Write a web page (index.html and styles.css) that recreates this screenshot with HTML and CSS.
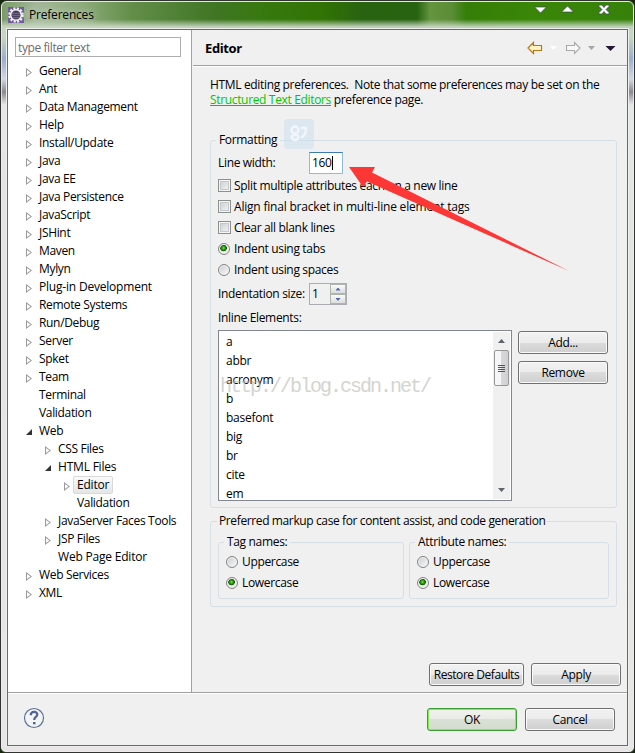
FILE: index.html
```html
<!DOCTYPE html>
<html lang="en">
<head>
<meta charset="utf-8">
<title>Preferences</title>
<link rel="stylesheet" href="styles.css">
</head>
<body>
<div class="window">
  <header class="titlebar">
    <svg class="app-icon" width="16" height="16" viewBox="0 0 16 16"><rect width="16" height="16" fill="#705d99"/><circle cx="8" cy="8" r="6.3" fill="none" stroke="#eee" stroke-width="3" stroke-dasharray="2 1.3"/><circle cx="8" cy="8" r="5.3" fill="#4a4060" stroke="#eee" stroke-width="1.6"/><path d="M4 6.5h8M3.5 8.5h9M4 10.5h8" stroke="#77738c" stroke-width=".8"/></svg>
    <span class="title">Preferences</span>
    <svg class="controls" width="100" height="18" viewBox="0 0 100 18"><g fill="#fff" stroke="#3c405f" stroke-width=".7"><path d="M9.5 5h12L15.500 11z"/><path d="M36.500 10h12L42.500 4z"/><path d="M74 3h3l2 2.500 2-2.500h3v1.500l-3 3 3 3v1.500h-3l-2-2.500-2 2.500h-3v-1.500l3-3-3-3z"/></g></svg>
  </header>
  <main class="client">
    <div class="panes">
      <nav class="sidebar">
        <div class="filter">type filter text</div>
        <ul class="tree">
          <li><i class="closed"></i><span>General</span></li>
          <li><i class="closed"></i><span>Ant</span></li>
          <li><i class="closed"></i><span>Data Management</span></li>
          <li><i class="closed"></i><span>Help</span></li>
          <li><i class="closed"></i><span>Install/Update</span></li>
          <li><i class="closed"></i><span>Java</span></li>
          <li><i class="closed"></i><span>Java EE</span></li>
          <li><i class="closed"></i><span>Java Persistence</span></li>
          <li><i class="closed"></i><span>JavaScript</span></li>
          <li><i class="closed"></i><span>JSHint</span></li>
          <li><i class="closed"></i><span>Maven</span></li>
          <li><i class="closed"></i><span>Mylyn</span></li>
          <li><i class="closed"></i><span class="loose">Plug-in Development</span></li>
          <li><i class="closed"></i><span>Remote Systems</span></li>
          <li><i class="closed"></i><span>Run/Debug</span></li>
          <li><i class="closed"></i><span>Server</span></li>
          <li><i class="closed"></i><span>Spket</span></li>
          <li><i class="closed"></i><span>Team</span></li>
          <li><i></i><span>Terminal</span></li>
          <li><i></i><span>Validation</span></li>
          <li><i class="open"></i><span>Web</span></li>
          <li class="l2"><i class="closed"></i><span>CSS Files</span></li>
          <li class="l2"><i class="open"></i><span class="loose">HTML Files</span></li>
          <li class="l3"><i class="closed"></i><span class="selected">Editor</span></li>
          <li class="l3"><i></i><span>Validation</span></li>
          <li class="l2"><i class="closed"></i><span>JavaServer Faces Tools</span></li>
          <li class="l2"><i class="closed"></i><span>JSP Files</span></li>
          <li class="l2"><i></i><span class="loose">Web Page Editor</span></li>
          <li><i class="closed"></i><span>Web Services</span></li>
          <li><i class="closed"></i><span>XML</span></li>
        </ul>
      </nav>
      <section class="page">
        <div class="page-head">
          <h1>Editor</h1>
          <svg width="92" height="14" viewBox="0 0 92 14"><path d="M1 7L6.500 1.500V4.500H14.500V9.500H6.500V12.500Z" fill="#fff2c4" stroke="#b87818" stroke-width="1.200"/><path d="M23 5h7l-3.500 4z" fill="#fff"/><path d="M53 7L47.500 1.500V4.500H39.500V9.500H47.500V12.500Z" fill="#f8f8f8" stroke="#aaa" stroke-width="1.100"/><path d="M61 5h7l-3.500 4z" fill="#a5a5a5"/><path d="M78.500 5h10l-5 5z" fill="#251432"/></svg>
        </div>
        <div class="page-body">
          <p class="intro">HTML editing preferences.&nbsp; Note that some preferences may be set on the<br><a>Structured Text Editors</a> preference page.</p>
          <fieldset class="formatting">
            <legend>Formatting</legend>
            <div class="row width-row"><span class="label">Line width:</span><span class="input">160<b class="caret"></b></span></div>
            <div class="row"><i class="check"></i><span>Split multiple attributes each on a new line</span></div>
            <div class="row"><i class="check"></i><span class="wide">Align final bracket in multi-line element tags</span></div>
            <div class="row"><i class="check"></i><span>Clear all blank lines</span></div>
            <div class="row"><i class="radio on"></i><span>Indent using tabs</span></div>
            <div class="row"><i class="radio"></i><span>Indent using spaces</span></div>
            <div class="row size-row"><span class="label">Indentation size:</span><span class="spinner"><span class="num">1</span><span class="steps"><i class="up"></i><i class="down"></i></span></span></div>
            <div class="row inline-row"><span>Inline Elements:</span></div>
            <div class="elements">
              <div class="list">
                <ul><li>a</li><li>abbr</li><li>acronym</li><li>b</li><li>basefont</li><li>big</li><li>br</li><li>cite</li><li>em</li></ul>
                <div class="scroll"><i class="up"></i><div class="thumb"><i></i><i></i><i></i><i></i></div><i class="down"></i></div>
              </div>
              <div class="side"><button>Add...</button><button>Remove</button></div>
            </div>
          </fieldset>
          <fieldset class="markup">
            <legend>Preferred markup case for content assist, and code generation</legend>
            <div class="cases">
              <fieldset><legend>Tag names:</legend>
                <div class="row"><i class="radio"></i><span>Uppercase</span></div>
                <div class="row"><i class="radio on"></i><span>Lowercase</span></div>
              </fieldset>
              <fieldset><legend>Attribute names:</legend>
                <div class="row"><i class="radio"></i><span>Uppercase</span></div>
                <div class="row"><i class="radio on"></i><span>Lowercase</span></div>
              </fieldset>
            </div>
          </fieldset>
          <div class="page-actions"><button class="restore">Restore Defaults</button><button>Apply</button></div>
        </div>
      </section>
    </div>
    <footer class="footer">
      <svg width="22" height="22" viewBox="0 0 22 22"><circle cx="11" cy="11" r="9.500" fill="#f3f4f6" stroke="#5c7399" stroke-width="1.200"/><path d="M7.700 8.300C7.800 3.700 14.600 4 14.300 7.700C14.100 10.100 11.200 9.900 11.200 13" fill="none" stroke="#506593" stroke-width="2.200"/><rect x="10" y="15" width="2.500" height="2.300" fill="#506593"/></svg>
      <div class="dialog-actions"><button class="ok">OK</button><button>Cancel</button></div>
    </footer>
  </main>
  <svg class="badge" width="30" height="30" viewBox="0 0 30 30"><rect width="30" height="30" rx="4" fill="#c8def0" opacity=".5"/><g fill="none" stroke="#f1f6fa" stroke-width="2.400" stroke-linecap="round"><circle cx="11" cy="11" r="3.500"/><path d="M8 17c3-2 8-1 6 2.500c-2 3-7 1-6-2M18 9h4q0 7-4 9"/></g></svg>
  <span class="watermark">http://blog.csdn.net/</span>
  <svg class="arrow" width="222" height="106" viewBox="0 0 222 106"><path d="M0 0H26L23 5.500L220 104L18 14.500L14 20Z" fill="#fc3736"/></svg>
</div>
</body>
</html>
```
FILE: styles.css
```css
* { box-sizing: border-box; }
html, body { margin: 0; }
body { width: 635px; height: 753px; overflow: hidden; background: #16280c; font: 12px/18px "Open Sans", "Noto Sans", sans-serif; letter-spacing: -.33px; color: #000; }
ul, p, h1 { margin: 0; padding: 0; list-style: none; }
i, b { display: block; flex: none; }
.window { position: relative; width: 635px; height: 753px; border: 1px solid #30332f; border-radius: 7px 7px 6px 6px; overflow: hidden; background: linear-gradient(#c5d6c2 0, #c5d6c2 36px, #9aafcd 58px, #d1d8e3 78px, #8e8791 91px, #e7e7ea 104px, #e4e3e3 200px, #e7e5e5 745px); display: flex; flex-direction: column; padding: 1px 6px 6px; }
.window::after { content: ""; position: absolute; inset: 0; border: 1px solid #e9efe8; border-radius: 6px 6px 5px 5px; opacity: .8; }
.titlebar { height: 27px; margin: 0 -5px; padding: 0 0 0 6px; display: flex; flex: none; align-items: flex-start; background: linear-gradient(transparent 64%, #c9d8c4ee 92%), linear-gradient(90deg, #7a9c68 0, #a3b79a 35px, #8dab7b 80px, #628e49 130px, #3f7523 215px, #38790f 260px, #317304 320px, #296311 360px, #276310 415px, #64943e 428px, #5a8d35 450px, #357e08 464px, #3a8607 530px, #36810b 100%); }
.app-icon { margin-top: 5px; flex: none; }
.title { margin: 4px auto 0 5px; letter-spacing: -.2px; text-shadow: 0 0 6px #dce7d5; }
.controls { margin-right: 8px; }
.client { flex: 1; min-height: 0; border: 1px solid #666b66; background: #f0f0f0; display: flex; flex-direction: column; box-shadow: 0 0 0 1px #edf0ec; }
.panes { flex: 1; display: flex; min-height: 0; }
.sidebar { width: 184px; flex: none; background: #fff; border-right: 1px solid #a0a0a0; padding: 7px 0 0 7px; }
.filter { width: 166px; height: 20px; border: 1px solid #abadb3; padding-left: 2px; color: #6d6d6d; line-height: 19px; letter-spacing: -.4px; }
.tree { margin-top: 5px; }
.tree li { height: 18px; display: flex; align-items: center; padding-left: 10px; white-space: nowrap; }
.tree li.l2 { padding-left: 29px; }
.tree li.l3 { padding-left: 48px; }
.tree i { width: 6px; height: 9px; margin: 3px 7px 0 1px; }
.tree i.closed { background: #999; clip-path: polygon(0 0, 100% 50%, 0 100%); position: relative; }
.tree i.closed::after { content: ""; position: absolute; inset: 0; background: #fff; clip-path: polygon(1px 2px, 4.5px 50%, 1px 7px); }
.tree i.open { background: #333; clip-path: polygon(100% 1px, 100% 7px, 0 7px); }
.loose { letter-spacing: -.2px; }
.selected { height: 18px; line-height: 16px; margin-left: -4px; padding: 0 3px; border: 1px solid #d9d9d9; border-radius: 2px; background: linear-gradient(#fafafa, #e6e6e6); letter-spacing: -.2px; }
.page { flex: 1; min-width: 0; margin-left: 1px; display: flex; flex-direction: column; }
.page-head { height: 36px; border-bottom: 1px solid #a0a0a0; box-shadow: 0 1px #fff; display: flex; justify-content: space-between; align-items: center; padding: 1px 8px 0 12px; }
h1 { font-size: 13px; letter-spacing: -.4px; }
.page-body { flex: 1; padding: 11px 6px 0 17px; }
.intro { line-height: 15px; height: 55px; white-space: nowrap; letter-spacing: -.34px; }
.intro a { color: #00c800; text-decoration: underline; }
fieldset { min-width: 0; margin: 0; padding: 0; border: 1px solid #d5dfe5; border-radius: 3px; }
legend { height: 16px; line-height: 16px; margin-left: -2px; padding: 0 3px; white-space: nowrap; }
.formatting { width: 407px; height: 376px; padding: 3px 7px 0; }
.row { height: 21px; display: flex; align-items: center; white-space: nowrap; }
.width-row { height: 24px; }
.width-row .label { width: 91px; }
.wide { letter-spacing: -.2px; }
.input { width: 34px; height: 22px; border: 1px solid #8fbbe0; border-top-color: #3d7bad; background: #fff; display: flex; align-items: center; padding-left: 2px; }
.caret { width: 1px; height: 14px; background: #000; }
.check { width: 13px; height: 13px; border: 1px solid #8e8f8f; background: linear-gradient(135deg, #c6cbd0, #f8f8f8); box-shadow: inset 0 0 0 1px #f4f4f4, inset 0 0 0 2px #c4c9cb; margin-right: 3px; }
.radio { width: 12px; height: 12px; border: 1px solid #848484; border-radius: 50%; background: linear-gradient(135deg, #c8ccd0, #fafafa); box-shadow: inset 0 0 0 1px #f4f4f4; margin-right: 4px; }
.radio.on { background: radial-gradient(circle at 45% 40%, #7de44d 0, #33a50c 1.500px, #125306 3px, #e4eae3 3.600px); }
.size-row { height: 28px; }
.size-row .label { width: 91px; }
.spinner { width: 38px; height: 22px; border: 1px solid #abadb3; display: flex; padding-left: 2px; }
.num { flex: 1; line-height: 20px; }
.steps { width: 16px; display: flex; flex-direction: column; }
.steps i { flex: 1; border: 1px solid #adb5ad; background: linear-gradient(#fafafa, #ddd); display: grid; place-items: center; }
.steps i::after { content: ""; width: 5px; height: 3px; background: #4a64a8; clip-path: polygon(50% 0, 100% 100%, 0 100%); }
.steps .down::after { transform: scaleY(-1); }
.inline-row { height: 20px; }
.elements { display: flex; margin-top: 2px; gap: 6px; }
.list { width: 294px; height: 171px; border: 1px solid #828790; background: #fff; display: flex; overflow: hidden; padding: 1px; }
.list ul { flex: 1; padding: 0 0 0 6px; letter-spacing: -.25px; }
.list li { height: 19px; line-height: 19px; }
.scroll { width: 17px; background: #f0f0f0; display: flex; flex-direction: column; align-items: center; padding: 7px 1px; }
.scroll .up, .scroll .down { width: 7px; height: 4px; background: #606468; clip-path: polygon(50% 0, 100% 100%, 0 100%); }
.scroll .down { transform: scaleY(-1); margin-top: auto; }
.thumb { width: 15px; height: 36px; margin-top: 7px; border: 1px solid #979797; border-radius: 2px; background: linear-gradient(90deg, #f5f5f5 0 45%, #d8d8da 50%, #d0d0d2); display: flex; flex-direction: column; align-items: center; justify-content: center; gap: 1px; }
.thumb i { width: 7px; height: 1px; background: #53565b; }
button { width: 90px; height: 23px; border: 1px solid #707070; border-radius: 3px; background: linear-gradient(#f2f2f2 0, #ebebeb 50%, #dcdcdc 50%, #cfcfcf); box-shadow: inset 0 0 0 1px #fafafa; font: inherit; letter-spacing: inherit; line-height: 20px; padding: 0; color: #000; white-space: nowrap; }
.side { display: flex; flex-direction: column; gap: 7px; padding-top: 1px; }
.markup { width: 407px; height: 94px; margin-top: 5px; padding: 5px 7px 0; }
.markup > legend { margin-left: -1px; padding: 0 2px; letter-spacing: -.38px; }
.cases { display: grid; grid-template-columns: 186px 200px; gap: 5px; }
.cases fieldset { height: 65px; padding: 1px 7px 0; }
.page-actions { display: flex; gap: 7px; margin-top: 56px; padding-left: 219px; }
.restore { width: 95px; }
.page-actions .restore { letter-spacing: -.45px; }
.footer { height: 53px; flex: none; border-top: 1px solid #a0a0a0; box-shadow: inset 0 1px #fff; display: flex; justify-content: space-between; padding: 15px 12px 0 15px; }
.footer > svg { margin-top: -1px; }
.dialog-actions { display: flex; gap: 8px; }
.ok { border-color: #3c9d35; box-shadow: inset 0 0 0 1px #83ed4c; background: linear-gradient(#f1f3ef 0, #e8ebe5 50%, #d9e0d5 50%, #d4dccf); }
.badge { position: absolute; left: 283px; top: 118px; }
.watermark { position: absolute; left: 219px; top: 374px; font: 20px/24px "Liberation Mono", monospace; letter-spacing: -2px; color: #b9b9b2; opacity: .6; }
.arrow { position: absolute; left: 348px; top: 166px; }
```
